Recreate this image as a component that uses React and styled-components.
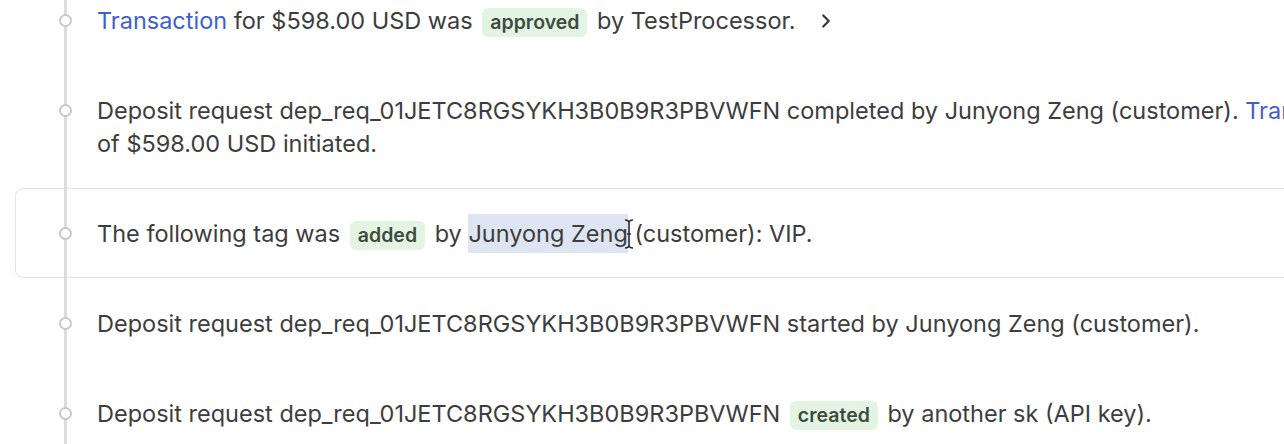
import React from "react";
import styled, { createGlobalStyle } from "styled-components";
import { ChevronRight } from "lucide-react";

const GlobalStyle = createGlobalStyle`
  html, body {
    margin: 0;
    padding: 0;
    background: #ffffff;
    overflow: hidden;
  }
  body {
    font-family: Inter, "Noto Sans", "Liberation Sans", sans-serif;
    -webkit-font-smoothing: antialiased;
  }
`;

const Page = styled.div`
  width: 1284px;
  height: 444px;
  overflow: hidden;
  padding-left: 15px;
  box-sizing: border-box;
`;

const List = styled.div`
  margin-top: -25px;
  width: 1440px;
  display: flex;
  flex-direction: column;
`;

const Item = styled.div`
  display: flex;
  align-items: stretch;
  border: 1px solid ${(p) => (p.$active ? "#e3e3e3" : "transparent")};
  border-radius: 8px;
  background: #fff;
`;

const Rail = styled.div`
  position: relative;
  flex: 0 0 81px;

  &::before {
    content: "";
    position: absolute;
    left: 48px;
    top: -1px;
    bottom: -1px;
    width: 3px;
    background: #dcdcdc;
  }
`;

const Dot = styled.span`
  position: absolute;
  left: 43px;
  top: 38px;
  width: 9px;
  height: 9px;
  border: 2px solid #c9c9c9;
  border-radius: 50%;
  background: #fff;
`;

const Body = styled.div`
  flex: 1;
  padding: 28px 0 27px;
  font-size: 23.5px;
  line-height: 33px;
  color: #3d3d3d;
  max-width: ${(p) => p.$width || "none"};
`;

const Link = styled.span`
  color: #3f5fcf;
`;

const Badge = styled.span`
  display: inline-block;
  margin: 0 3px;
  padding: 0 8px;
  line-height: 29px;
  border-radius: 6px;
  background: #e3f5e2;
  color: #3f4b41;
  font-size: 19.5px;
  font-weight: 600;
`;

const Selected = styled.span`
  position: relative;
  background: #dde5f3;
  padding: 5px 0;
`;

const Cursor = styled.svg`
  position: absolute;
  right: -7px;
  top: 4px;
`;

const More = styled.span`
  display: inline-flex;
  vertical-align: middle;
  margin-left: 19px;
  color: #3a3a3a;
  position: relative;
  top: -2px;
`;

export default function App() {
  return (
    <Page>
      <GlobalStyle />
      <List>
        <Item>
          <Rail>
            <Dot />
          </Rail>
          <Body>
            <Link>Transaction</Link> for $598.00 USD was{" "}
            <Badge>approved</Badge> by TestProcessor.
            <More>
              <ChevronRight size={22} strokeWidth={2.5} />
            </More>
          </Body>
        </Item>
        <Item>
          <Rail>
            <Dot />
          </Rail>
          <Body $width="1300px">
            Deposit request dep_req_01JETC8RGSYKH3B0B9R3PBVWFN completed by
            Junyong Zeng (customer). <Link>Transaction</Link> of $598.00 USD
            initiated.
          </Body>
        </Item>
        <Item $active>
          <Rail>
            <Dot />
          </Rail>
          <Body>
            The following tag was <Badge>added</Badge> by{" "}
            <Selected>
              Junyong Zeng
              <Cursor width="12" height="32" viewBox="0 0 12 32">
                <path
                  d="M2 2 C4 2 6 3 6 5 L6 27 C6 29 4 30 2 30 M10 2 C8 2 6 3 6 5 M6 27 C6 29 8 30 10 30 M4 16 L8 16"
                  fill="none"
                  stroke="#2a2a2a"
                  strokeWidth="1.6"
                />
              </Cursor>
            </Selected>{" "}
            (customer): VIP.
          </Body>
        </Item>
        <Item>
          <Rail>
            <Dot />
          </Rail>
          <Body>
            Deposit request dep_req_01JETC8RGSYKH3B0B9R3PBVWFN started by
            Junyong Zeng (customer).
          </Body>
        </Item>
        <Item>
          <Rail>
            <Dot />
          </Rail>
          <Body>
            Deposit request dep_req_01JETC8RGSYKH3B0B9R3PBVWFN{" "}
            <Badge>created</Badge> by another sk (API key).
          </Body>
        </Item>
      </List>
    </Page>
  );
}
